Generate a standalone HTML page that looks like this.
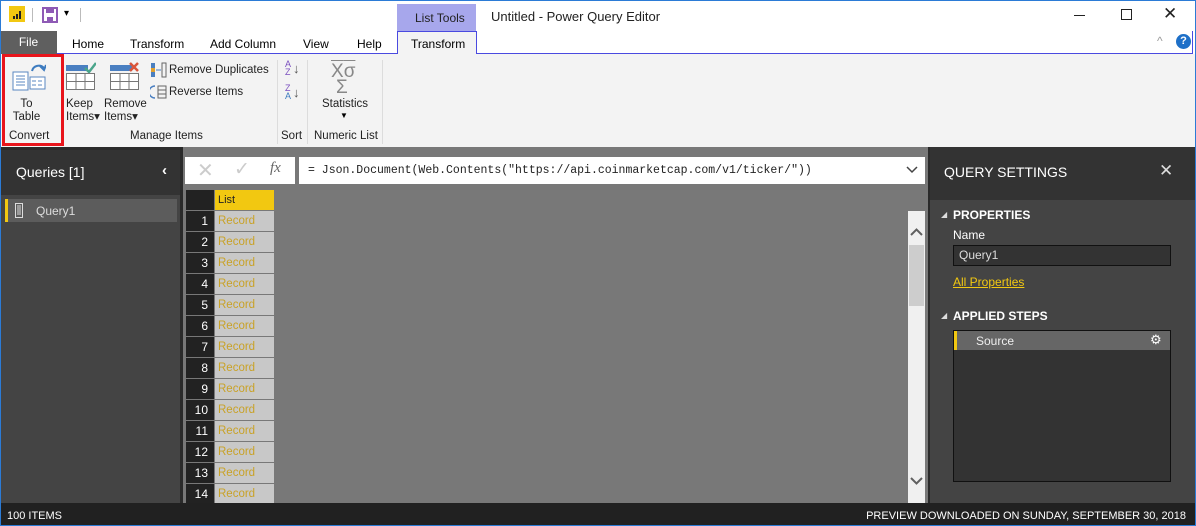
<!DOCTYPE html>
<html><head><meta charset="utf-8">
<style>
*{margin:0;padding:0;box-sizing:border-box}
body{width:1196px;height:526px;overflow:hidden;font-family:"Liberation Sans",sans-serif;font-size:12px;background:#fff;position:relative}
.a{position:absolute}
.t{white-space:nowrap}
.rb{color:#222;font-size:11.5px}
.sep{position:absolute;top:60px;width:1px;height:84px;background:#dcdcdc}
.rn{position:absolute;left:186px;width:28px;height:20px;background:#222;color:#fff;text-align:right;padding-right:6px;font-size:12px;line-height:20px}
.rc{position:absolute;left:215px;width:59px;height:20px;background:#c8c8c8;color:#c9a227;font-size:11.5px;line-height:20px;padding-left:3px}
</style></head><body>
<div class="a" style="left:0;top:0;width:1196px;height:526px;border:1px solid #2b7bd6;z-index:50;pointer-events:none"></div>
<div class="a" style="left:9px;top:6px;width:16px;height:16px;background:#f2c811"></div>
<svg class="a" style="left:9px;top:6px" width="16" height="16"><rect x="4" y="10" width="2" height="3" fill="#222"/><rect x="7" y="8" width="2" height="5" fill="#222"/><rect x="10" y="5" width="2" height="8" fill="#222"/></svg>
<div class="a" style="left:32px;top:8px;width:1px;height:14px;background:#bbb"></div>
<svg class="a" style="left:42px;top:7px" width="16" height="16"><rect x="1" y="1" width="14" height="14" fill="none" stroke="#8e5ab5" stroke-width="2"/><rect x="4" y="1" width="8" height="5" fill="#8e5ab5"/><rect x="5" y="10" width="6" height="5" fill="#8e5ab5"/></svg>
<div class="a t" style="left:64px;top:8px;font-size:10px">▾</div>
<div class="a" style="left:80px;top:8px;width:1px;height:14px;background:#bbb"></div>
<div class="a" style="left:397px;top:4px;width:79px;height:27px;background:#a7a7ec"></div>
<div class="a t" style="left:415px;top:11px;font-size:12px;color:#222">List Tools</div>
<div class="a t" style="left:491px;top:9px;font-size:13px;color:#222">Untitled - Power Query Editor</div>
<div class="a" style="left:1074px;top:15px;width:11px;height:1px;background:#222"></div>
<div class="a" style="left:1121px;top:9px;width:11px;height:11px;border:1px solid #222"></div>
<div class="a t" style="left:1163px;top:4px;font-size:17px;color:#222">✕</div>
<div class="a" style="left:0;top:31px;width:57px;height:23px;background:#5f5f5f;color:#fff;font-size:12px;line-height:23px;text-align:center">File</div>
<div class="a" style="left:57px;top:53px;width:1136px;height:1px;background:#4a4ae0"></div>
<div class="a" style="left:1192px;top:31px;width:1px;height:23px;background:#4a4ae0"></div>
<div class="a t" style="left:72px;top:37px">Home</div>
<div class="a t" style="left:130px;top:37px">Transform</div>
<div class="a t" style="left:210px;top:37px">Add Column</div>
<div class="a t" style="left:303px;top:37px">View</div>
<div class="a t" style="left:357px;top:37px">Help</div>
<div class="a" style="left:397px;top:31px;width:80px;height:24px;background:#f3f3f3;border:1px solid #4a4ae0;border-bottom:none"></div>
<div class="a t" style="left:411px;top:37px">Transform</div>
<div class="a t" style="left:1157px;top:34px;color:#999;font-size:12px">^</div>
<div class="a" style="left:1176px;top:34px;width:15px;height:15px;border-radius:50%;background:#1e70c8;color:#fff;font-size:11px;font-weight:bold;text-align:center;line-height:15px">?</div>
<div class="a" style="left:0;top:54px;width:1196px;height:93px;background:#f3f3f3"></div>
<svg class="a" style="left:12px;top:62px" width="34" height="30"><path d="M20 9 A7 7 0 0 1 32 6" fill="none" stroke="#3d7bbf" stroke-width="2"/><path d="M28 4 L32 8 L34 3" fill="none" stroke="#3d7bbf" stroke-width="2"/><rect x="1" y="10" width="15" height="18" fill="#fff" stroke="#5a87c0"/><path d="M4 14h9M4 17h9M4 20h9M4 23h9" stroke="#5a87c0"/><rect x="18" y="15" width="15" height="12" fill="#fff" stroke="#5a87c0"/><path d="M20 19h4M26 19h4M20 23h4M26 23h4" stroke="#5a87c0"/></svg>
<div class="a rb" style="left:0;top:98px;width:53px;text-align:center;line-height:13px">To<br>Table</div>
<div class="a t rb" style="left:9px;top:130px">Convert</div>
<div class="a" style="left:2px;top:54px;width:62px;height:92px;border:3px solid #e8141b"></div>
<svg class="a" style="left:66px;top:62px" width="30" height="30"><rect x="0" y="3" width="22" height="6" fill="#4a7fc1"/><path d="M19 6l4 4 7-9" fill="none" stroke="#4aa58b" stroke-width="2.5"/><rect x="0.5" y="11.5" width="28" height="16" fill="#fff" stroke="#777"/><path d="M10 12v15M19 12v15M1 19.5h28" stroke="#777"/></svg>
<div class="a rb" style="left:66px;top:98px;line-height:13px">Keep<br>Items▾</div>
<svg class="a" style="left:110px;top:62px" width="30" height="30"><rect x="0" y="3" width="22" height="6" fill="#4a7fc1"/><path d="M20 1l8 8M28 1l-8 8" stroke="#d9553a" stroke-width="2.5"/><rect x="0.5" y="11.5" width="28" height="16" fill="#fff" stroke="#777"/><path d="M10 12v15M19 12v15M1 19.5h28" stroke="#777"/></svg>
<div class="a rb" style="left:104px;top:98px;line-height:13px">Remove<br>Items▾</div>
<svg class="a" style="left:150px;top:62px" width="18" height="16"><rect x="1" y="1" width="4" height="14" fill="#4a7fc1"/><rect x="1" y="6" width="4" height="4" fill="#e0a030"/><rect x="12" y="1" width="4" height="14" fill="none" stroke="#666"/><path d="M6 8h5" stroke="#4a7fc1"/></svg>
<div class="a t rb" style="left:169px;top:64px">Remove Duplicates</div>
<svg class="a" style="left:150px;top:84px" width="18" height="16"><path d="M5 2a6 6 0 0 0 0 12" fill="none" stroke="#4a7fc1" stroke-width="1.5"/><rect x="8" y="2" width="8" height="12" fill="none" stroke="#666"/><path d="M8 6h8M8 10h8" stroke="#666"/></svg>
<div class="a t rb" style="left:169px;top:86px">Reverse Items</div>
<div class="a t rb" style="left:130px;top:130px">Manage Items</div>
<div class="sep" style="left:277px"></div>
<div class="a" style="left:285px;top:60px;font-size:9px;line-height:8px;color:#7a4fbf">A<br><span style="color:#7a4fbf">Z</span></div>
<div class="a" style="left:293px;top:61px;font-size:13px;color:#555">↓</div>
<div class="a" style="left:285px;top:84px;font-size:9px;line-height:8px;color:#7a4fbf">Z<br><span style="color:#3d7bbf">A</span></div>
<div class="a" style="left:293px;top:85px;font-size:13px;color:#555">↓</div>
<div class="a t rb" style="left:281px;top:130px">Sort</div>
<div class="sep" style="left:307px"></div>
<div class="a t" style="left:331px;top:63px;font-size:19px;color:#888;line-height:18px;text-decoration:overline">X<span style="text-decoration:none">σ</span></div>
<div class="a t" style="left:336px;top:77px;font-size:19px;color:#888">Σ</div>
<div class="a t rb" style="left:322px;top:98px">Statistics</div>
<div class="a t" style="left:340px;top:111px;font-size:8px">▼</div>
<div class="a t rb" style="left:314px;top:130px">Numeric List</div>
<div class="sep" style="left:382px"></div>
<div class="a" style="left:1px;top:147px;width:1194px;height:356px;background:#2a2a2a"></div>
<div class="a" style="left:1px;top:150px;width:179px;height:353px;background:#444"></div>
<div class="a" style="left:1px;top:150px;width:179px;height:45px;background:#333"></div>
<div class="a t" style="left:16px;top:164px;color:#fff;font-size:14px">Queries [1]</div>
<div class="a t" style="left:162px;top:162px;color:#fff;font-size:15px;font-weight:bold">‹</div>
<div class="a" style="left:5px;top:199px;width:172px;height:23px;background:#5c5c5c;border-left:3px solid #f2c811"></div>
<svg class="a" style="left:15px;top:203px" width="8" height="15"><rect x="0.5" y="0.5" width="7" height="14" fill="none" stroke="#ddd"/><path d="M2 3h4M2 5h4M2 7h4M2 9h4M2 11h4" stroke="#ddd"/></svg>
<div class="a t" style="left:36px;top:204px;color:#ddd;font-size:12px">Query1</div>
<div class="a" style="left:183px;top:147px;width:745px;height:356px;background:#787878"></div>
<div class="a" style="left:185px;top:157px;width:110px;height:27px;background:#fff"></div>
<div class="a t" style="left:197px;top:158px;font-size:20px;color:#ccc">✕</div>
<div class="a t" style="left:234px;top:158px;font-size:19px;color:#ccc">✓</div>
<div class="a t" style="left:270px;top:160px;font-size:15px;color:#666;font-family:'Liberation Serif',serif;font-style:italic">fx</div>
<div class="a" style="left:299px;top:157px;width:626px;height:27px;background:#fff"></div>
<div class="a t" style="left:308px;top:164px;font-family:'Liberation Mono',monospace;font-size:11.5px;color:#222">= Json.Document(Web.Contents("https://api.coinmarketcap.com/v1/ticker/"))</div>
<svg class="a" style="left:906px;top:166px" width="12" height="8"><path d="M1 1l5 5 5-5" fill="none" stroke="#444" stroke-width="1.5"/></svg>
<div class="a" style="left:186px;top:190px;width:28px;height:20px;background:#222"></div>
<div class="a" style="left:215px;top:190px;width:59px;height:20px;background:#f2c811;font-size:11px;line-height:20px;padding-left:3px;color:#222">List</div>
<div class="rn" style="top:211px">1</div><div class="rc" style="top:211px">Record</div>
<div class="rn" style="top:232px">2</div><div class="rc" style="top:232px">Record</div>
<div class="rn" style="top:253px">3</div><div class="rc" style="top:253px">Record</div>
<div class="rn" style="top:274px">4</div><div class="rc" style="top:274px">Record</div>
<div class="rn" style="top:295px">5</div><div class="rc" style="top:295px">Record</div>
<div class="rn" style="top:316px">6</div><div class="rc" style="top:316px">Record</div>
<div class="rn" style="top:337px">7</div><div class="rc" style="top:337px">Record</div>
<div class="rn" style="top:358px">8</div><div class="rc" style="top:358px">Record</div>
<div class="rn" style="top:379px">9</div><div class="rc" style="top:379px">Record</div>
<div class="rn" style="top:400px">10</div><div class="rc" style="top:400px">Record</div>
<div class="rn" style="top:421px">11</div><div class="rc" style="top:421px">Record</div>
<div class="rn" style="top:442px">12</div><div class="rc" style="top:442px">Record</div>
<div class="rn" style="top:463px">13</div><div class="rc" style="top:463px">Record</div>
<div class="rn" style="top:484px">14</div><div class="rc" style="top:484px;height:19px">Record</div>
<div class="a" style="left:908px;top:211px;width:17px;height:292px;background:#f0f0f0"></div>
<div class="a" style="left:909px;top:245px;width:15px;height:61px;background:#cdcdcd"></div>
<svg class="a" style="left:910px;top:228px" width="13" height="8"><path d="M1 7l5.5-5.5 5.5 5.5" fill="none" stroke="#606060" stroke-width="2"/></svg>
<svg class="a" style="left:910px;top:477px" width="13" height="8"><path d="M1 1l5.5 5.5 5.5-5.5" fill="none" stroke="#606060" stroke-width="2"/></svg>
<div class="a" style="left:930px;top:147px;width:265px;height:356px;background:#444"></div>
<div class="a" style="left:930px;top:147px;width:265px;height:53px;background:#333"></div>
<div class="a t" style="left:944px;top:164px;color:#fff;font-size:14px">QUERY SETTINGS</div>
<div class="a t" style="left:1159px;top:161px;color:#ddd;font-size:17px">✕</div>
<div class="a t" style="left:941px;top:210px;color:#ddd;font-size:8px">◢</div>
<div class="a t" style="left:953px;top:208px;color:#fff;font-size:12px;font-weight:bold">PROPERTIES</div>
<div class="a t" style="left:953px;top:228px;color:#fff;font-size:12px">Name</div>
<div class="a" style="left:953px;top:245px;width:218px;height:21px;background:#333;border:1px solid #111;color:#ddd;padding-left:5px;line-height:19px">Query1</div>
<div class="a t" style="left:953px;top:275px;color:#f2c811;font-size:12px;text-decoration:underline">All Properties</div>
<div class="a t" style="left:941px;top:311px;color:#ddd;font-size:8px">◢</div>
<div class="a t" style="left:953px;top:309px;color:#fff;font-size:12px;font-weight:bold">APPLIED STEPS</div>
<div class="a" style="left:953px;top:330px;width:218px;height:152px;background:#333;border:1px solid #111"></div>
<div class="a" style="left:954px;top:331px;width:216px;height:19px;background:#666;border-left:3px solid #f2c811"></div>
<div class="a t" style="left:976px;top:334px;color:#eee;font-size:12px">Source</div>
<div class="a t" style="left:1150px;top:332px;color:#fff;font-size:13px">⚙</div>
<div class="a" style="left:1px;top:503px;width:1194px;height:22px;background:#212121"></div>
<div class="a t" style="left:7px;top:510px;color:#fff;font-size:11px">100 ITEMS</div>
<div class="a t" style="right:10px;top:510px;color:#fff;font-size:11px">PREVIEW DOWNLOADED ON SUNDAY, SEPTEMBER 30, 2018</div>
</body></html>
